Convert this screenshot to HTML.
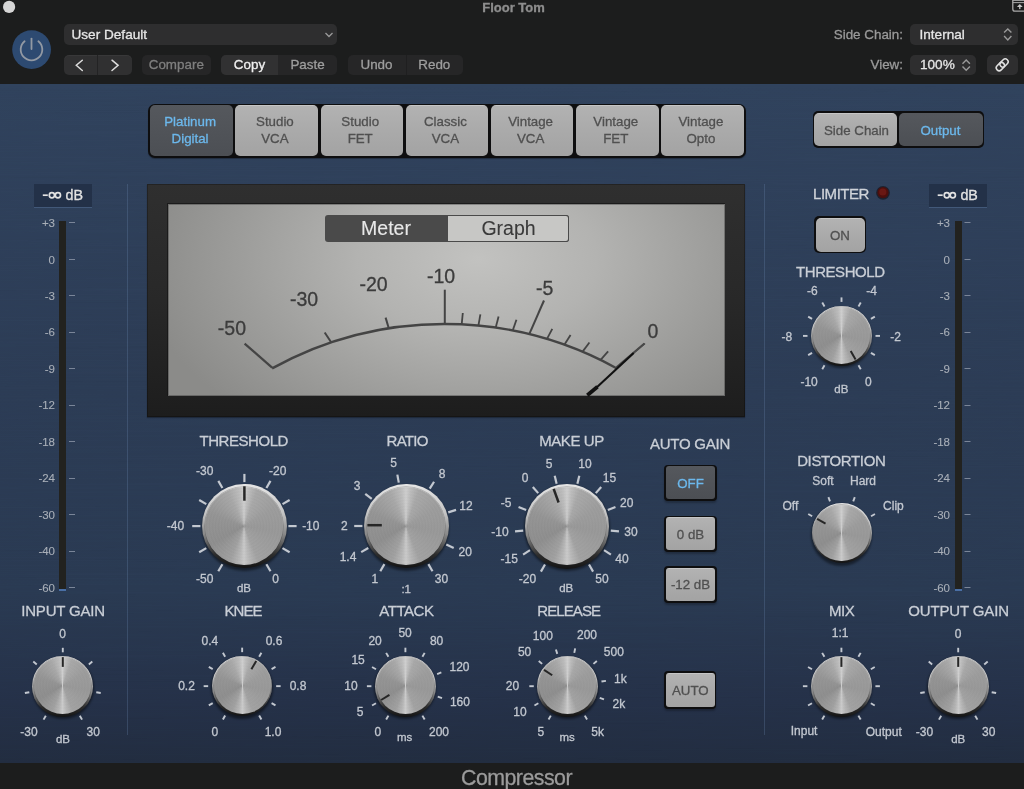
<!DOCTYPE html>
<html><head><meta charset="utf-8"><style>
html,body{margin:0;padding:0;width:1024px;height:789px;overflow:hidden;background:#1c1d1d;font-family:"Liberation Sans", sans-serif;}
</style></head><body>
<div style="position:relative;width:1024px;height:789px;overflow:hidden;">
<div style="position:absolute;left:0px;top:0px;width:1024px;height:84px;background:#1c1d1d;"></div><div style="position:absolute;left:64px;top:24px;width:273px;height:20.5px;background:#2e2e2f;border-radius:5px;"></div><div style="position:absolute;left:64px;top:55px;width:68px;height:19.5px;background:#303031;border-radius:5px;box-shadow:inset 0 1px 0 rgba(255,255,255,0.04);"></div><div style="position:absolute;left:97px;top:55px;width:1.2000000000000028px;height:19.5px;background:#232324;"></div><div style="position:absolute;left:142px;top:55px;width:68.5px;height:19.5px;background:#262627;border-radius:5px;"></div><div style="position:absolute;left:221px;top:55px;width:116px;height:19.5px;background:#262627;border-radius:5px;"></div><div style="position:absolute;left:221px;top:55px;width:57px;height:19.5px;background:#313132;border-radius:5px 0 0 5px;"></div><div style="position:absolute;left:348px;top:55px;width:114.5px;height:19.5px;background:#262627;border-radius:5px;"></div><div style="position:absolute;left:406px;top:55px;width:1px;height:19.5px;background:#1f1f20;"></div><div style="position:absolute;left:910px;top:24px;width:107.5px;height:20.5px;background:#2e2e2f;border-radius:5px;"></div><div style="position:absolute;left:910px;top:55px;width:66px;height:19.5px;background:#2e2e2f;border-radius:5px;"></div><div style="position:absolute;left:987px;top:55px;width:30.5px;height:19.5px;background:#2e2e2f;border-radius:5px;"></div><div style="position:absolute;left:0px;top:84px;width:1024px;height:678.5px;background:linear-gradient(180deg,#2f415b 0%,#2b3b54 45%,#293951 75%,#243047 91%,#212c3f 100%);"></div><svg width="1024" height="679" style="position:absolute;left:0;top:84px;opacity:0.07;mix-blend-mode:overlay;"><filter id="brush" x="0" y="0" width="100%" height="100%"><feTurbulence type="fractalNoise" baseFrequency="0.004 0.9" numOctaves="2" seed="3"/><feColorMatrix type="saturate" values="0"/></filter><rect width="1024" height="679" filter="url(#brush)"/></svg><div style="position:absolute;left:0px;top:762.5px;width:1024px;height:26.5px;background:#1c1d1d;"></div><div style="position:absolute;left:127px;top:184px;width:1px;height:551px;background:rgba(110,140,180,0.27);"></div><div style="position:absolute;left:764px;top:184px;width:1px;height:551px;background:rgba(110,140,180,0.27);"></div><div style="position:absolute;left:148.4px;top:103.7px;width:597.8000000000001px;height:53.89999999999999px;background:#0e0e0f;border-radius:7px;box-shadow:0 1px 1px rgba(0,0,0,0.3);"></div><div style="position:absolute;left:150px;top:105.4px;width:83.4px;height:50.900000000000006px;background:linear-gradient(180deg,#55585d 0%,#4c4f54 100%);border-radius:5px;"></div><div style="position:absolute;left:235px;top:105.4px;width:83px;height:50.900000000000006px;background:linear-gradient(180deg,#cfcfcf 0px,#b2b2b2 1.5px,#aaaaaa 50%,#a3a3a3 100%);border-radius:5px;"></div><div style="position:absolute;left:320.6px;top:105.4px;width:82.39999999999998px;height:50.900000000000006px;background:linear-gradient(180deg,#cfcfcf 0px,#b2b2b2 1.5px,#aaaaaa 50%,#a3a3a3 100%);border-radius:5px;"></div><div style="position:absolute;left:405.6px;top:105.4px;width:82.79999999999995px;height:50.900000000000006px;background:linear-gradient(180deg,#cfcfcf 0px,#b2b2b2 1.5px,#aaaaaa 50%,#a3a3a3 100%);border-radius:5px;"></div><div style="position:absolute;left:491px;top:105.4px;width:82.39999999999998px;height:50.900000000000006px;background:linear-gradient(180deg,#cfcfcf 0px,#b2b2b2 1.5px,#aaaaaa 50%,#a3a3a3 100%);border-radius:5px;"></div><div style="position:absolute;left:576px;top:105.4px;width:82.75px;height:50.900000000000006px;background:linear-gradient(180deg,#cfcfcf 0px,#b2b2b2 1.5px,#aaaaaa 50%,#a3a3a3 100%);border-radius:5px;"></div><div style="position:absolute;left:660.7px;top:105.4px;width:83.5px;height:50.900000000000006px;background:linear-gradient(180deg,#cfcfcf 0px,#b2b2b2 1.5px,#aaaaaa 50%,#a3a3a3 100%);border-radius:5px;"></div><div style="position:absolute;left:812.5px;top:110.75px;width:171.5px;height:37.25px;background:#0e0e0f;border-radius:5px;"></div><div style="position:absolute;left:814px;top:112.5px;width:83px;height:33.5px;background:linear-gradient(180deg,#cfcfcf 0px,#b2b2b2 1.5px,#aaaaaa 50%,#a3a3a3 100%);border-radius:5px;"></div><div style="position:absolute;left:898.5px;top:112.5px;width:84.0px;height:33.5px;background:linear-gradient(180deg,#55585d 0%,#4c4f54 100%);border-radius:5px;"></div><div style="position:absolute;left:33.6px;top:183.8px;width:58.4px;height:23.0px;background:#233148;box-shadow:0 1px 0 rgba(90,120,160,0.45);"></div><div style="position:absolute;left:58.6px;top:220.6px;width:7.399999999999999px;height:369.4px;background:#22221f;"></div><div style="position:absolute;left:58.6px;top:589px;width:7.399999999999999px;height:1.5px;background:#4a6fa5;"></div><div style="position:absolute;left:928.5px;top:183.8px;width:58.5px;height:23.0px;background:#233148;box-shadow:0 1px 0 rgba(90,120,160,0.45);"></div><div style="position:absolute;left:954.8px;top:220.6px;width:7.600000000000023px;height:369.4px;background:#22221f;"></div><div style="position:absolute;left:954.8px;top:589px;width:7.600000000000023px;height:1.5px;background:#4a6fa5;"></div><div style="position:absolute;left:814px;top:216px;width:52px;height:37px;background:#0e0e0f;border-radius:5px;"></div><div style="position:absolute;left:815.5px;top:217.5px;width:49.0px;height:34.0px;background:linear-gradient(180deg,#cfcfcf 0px,#b2b2b2 1.5px,#aaaaaa 50%,#a3a3a3 100%);border-radius:5px;"></div><div style="position:absolute;left:147px;top:184px;width:598px;height:232.60000000000002px;background:linear-gradient(180deg,#2f2f2f 0%,#282828 50%,#1d1d1d 100%);box-shadow:inset 0 0 0 1px rgba(0,0,0,0.25),0 1px 1px rgba(0,0,0,0.3);"></div><div style="position:absolute;left:167px;top:203px;width:558.4px;height:193.39999999999998px;background:rgba(20,20,20,0.7);"></div><div style="position:absolute;left:168px;top:204px;width:556.8px;height:191.8px;background:radial-gradient(ellipse 340px 210px at 310px 55px,#c2c2c0 0%,#b3b3b1 35%,#9d9d9b 70%,#8b8b89 100%);box-shadow:inset 0 0 0 1px rgba(40,40,40,0.35);"></div><div style="position:absolute;left:325px;top:215px;width:244px;height:27px;background:#4a4a4a;border-radius:3px;"></div><div style="position:absolute;left:448px;top:216px;width:120px;height:25px;background:#c7c7c5;border-radius:0 2px 2px 0;box-shadow:0 0 0 1px #4a4a4a;"></div><div style="position:absolute;left:664.4px;top:464.5px;width:52.30000000000007px;height:36.89999999999998px;background:#0e0e0f;border-radius:4px;box-shadow:0 2px 2px rgba(0,0,0,0.25);"></div><div style="position:absolute;left:666.0px;top:466.1px;width:49.10000000000002px;height:32.89999999999998px;background:linear-gradient(180deg,#55585d 0%,#4c4f54 100%);border-radius:3px;"></div><div style="position:absolute;left:664.4px;top:515.8px;width:52.30000000000007px;height:36.60000000000002px;background:#0e0e0f;border-radius:4px;box-shadow:0 2px 2px rgba(0,0,0,0.25);"></div><div style="position:absolute;left:666.0px;top:517.4px;width:49.10000000000002px;height:32.60000000000002px;background:linear-gradient(180deg,#cfcfcf 0px,#b2b2b2 1.5px,#aaaaaa 50%,#a3a3a3 100%);border-radius:3px;"></div><div style="position:absolute;left:664.4px;top:566.2px;width:52.30000000000007px;height:36.799999999999955px;background:#0e0e0f;border-radius:4px;box-shadow:0 2px 2px rgba(0,0,0,0.25);"></div><div style="position:absolute;left:666.0px;top:567.8000000000001px;width:49.10000000000002px;height:32.799999999999955px;background:linear-gradient(180deg,#cfcfcf 0px,#b2b2b2 1.5px,#aaaaaa 50%,#a3a3a3 100%);border-radius:3px;"></div><div style="position:absolute;left:664.3px;top:671.4px;width:52.0px;height:38.10000000000002px;background:#0e0e0f;border-radius:4px;box-shadow:0 2px 2px rgba(0,0,0,0.25);"></div><div style="position:absolute;left:665.9px;top:673.0px;width:48.799999999999955px;height:34.10000000000002px;background:linear-gradient(180deg,#cfcfcf 0px,#b2b2b2 1.5px,#aaaaaa 50%,#a3a3a3 100%);border-radius:3px;"></div>
<div style="position:absolute;left:201.50px;top:484.90px;width:85.80px;height:85.80px;border-radius:50%;background:rgba(0,0,0,0.45);filter:blur(1.2px);"></div><div style="position:absolute;left:202.00px;top:483.70px;width:84.80px;height:84.80px;border-radius:50%;background:linear-gradient(180deg,#e6e6e6 0%,#c4c4c4 35%,#888888 60%,#2c2c2c 84%,#141414 100%);"></div><div style="position:absolute;left:205.40px;top:486.70px;width:78.00px;height:78.00px;border-radius:50%;background:repeating-radial-gradient(circle at 50% 50%,rgba(255,255,255,0.014) 0px,rgba(0,0,0,0.014) 1.5px,rgba(255,255,255,0.014) 3px),conic-gradient(from 0deg,#cecece 0deg,#bdbdbd 7deg,#a8a8a8 20deg,#9c9c9c 60deg,#989898 100deg,#a2a2a2 158deg,#b8b8b8 172deg,#cacaca 180deg,#b6b6b6 188deg,#a0a0a0 202deg,#8e8e8e 240deg,#949494 290deg,#a8a8a8 335deg,#bcbcbc 352deg,#cecece 360deg);box-shadow:0 0 0 0.7px rgba(40,40,40,0.28);"></div><div style="position:absolute;left:363.50px;top:484.80px;width:85.80px;height:85.80px;border-radius:50%;background:rgba(0,0,0,0.45);filter:blur(1.2px);"></div><div style="position:absolute;left:364.00px;top:483.60px;width:84.80px;height:84.80px;border-radius:50%;background:linear-gradient(180deg,#e6e6e6 0%,#c4c4c4 35%,#888888 60%,#2c2c2c 84%,#141414 100%);"></div><div style="position:absolute;left:367.40px;top:486.60px;width:78.00px;height:78.00px;border-radius:50%;background:repeating-radial-gradient(circle at 50% 50%,rgba(255,255,255,0.014) 0px,rgba(0,0,0,0.014) 1.5px,rgba(255,255,255,0.014) 3px),conic-gradient(from 0deg,#cecece 0deg,#bdbdbd 7deg,#a8a8a8 20deg,#9c9c9c 60deg,#989898 100deg,#a2a2a2 158deg,#b8b8b8 172deg,#cacaca 180deg,#b6b6b6 188deg,#a0a0a0 202deg,#8e8e8e 240deg,#949494 290deg,#a8a8a8 335deg,#bcbcbc 352deg,#cecece 360deg);box-shadow:0 0 0 0.7px rgba(40,40,40,0.28);"></div><div style="position:absolute;left:524.10px;top:485.20px;width:85.80px;height:85.80px;border-radius:50%;background:rgba(0,0,0,0.45);filter:blur(1.2px);"></div><div style="position:absolute;left:524.60px;top:484.00px;width:84.80px;height:84.80px;border-radius:50%;background:linear-gradient(180deg,#e6e6e6 0%,#c4c4c4 35%,#888888 60%,#2c2c2c 84%,#141414 100%);"></div><div style="position:absolute;left:528.00px;top:487.00px;width:78.00px;height:78.00px;border-radius:50%;background:repeating-radial-gradient(circle at 50% 50%,rgba(255,255,255,0.014) 0px,rgba(0,0,0,0.014) 1.5px,rgba(255,255,255,0.014) 3px),conic-gradient(from 0deg,#cecece 0deg,#bdbdbd 7deg,#a8a8a8 20deg,#9c9c9c 60deg,#989898 100deg,#a2a2a2 158deg,#b8b8b8 172deg,#cacaca 180deg,#b6b6b6 188deg,#a0a0a0 202deg,#8e8e8e 240deg,#949494 290deg,#a8a8a8 335deg,#bcbcbc 352deg,#cecece 360deg);box-shadow:0 0 0 0.7px rgba(40,40,40,0.28);"></div><div style="position:absolute;left:31.80px;top:657.00px;width:62.00px;height:62.00px;border-radius:50%;background:rgba(0,0,0,0.45);filter:blur(1.2px);"></div><div style="position:absolute;left:32.30px;top:655.80px;width:61.00px;height:61.00px;border-radius:50%;background:linear-gradient(180deg,#e6e6e6 0%,#c4c4c4 35%,#888888 60%,#2c2c2c 84%,#141414 100%);"></div><div style="position:absolute;left:34.20px;top:657.30px;width:57.20px;height:57.20px;border-radius:50%;background:repeating-radial-gradient(circle at 50% 50%,rgba(255,255,255,0.01) 0px,rgba(0,0,0,0.01) 1.5px,rgba(255,255,255,0.01) 3px),conic-gradient(from 0deg,#cecece 0deg,#bdbdbd 7deg,#a8a8a8 20deg,#9c9c9c 60deg,#989898 100deg,#a2a2a2 158deg,#b8b8b8 172deg,#cacaca 180deg,#b6b6b6 188deg,#a0a0a0 202deg,#8e8e8e 240deg,#949494 290deg,#a8a8a8 335deg,#bcbcbc 352deg,#cecece 360deg);box-shadow:0 0 0 0.7px rgba(40,40,40,0.28);"></div><div style="position:absolute;left:927.20px;top:657.00px;width:62.00px;height:62.00px;border-radius:50%;background:rgba(0,0,0,0.45);filter:blur(1.2px);"></div><div style="position:absolute;left:927.70px;top:655.80px;width:61.00px;height:61.00px;border-radius:50%;background:linear-gradient(180deg,#e6e6e6 0%,#c4c4c4 35%,#888888 60%,#2c2c2c 84%,#141414 100%);"></div><div style="position:absolute;left:929.60px;top:657.30px;width:57.20px;height:57.20px;border-radius:50%;background:repeating-radial-gradient(circle at 50% 50%,rgba(255,255,255,0.01) 0px,rgba(0,0,0,0.01) 1.5px,rgba(255,255,255,0.01) 3px),conic-gradient(from 0deg,#cecece 0deg,#bdbdbd 7deg,#a8a8a8 20deg,#9c9c9c 60deg,#989898 100deg,#a2a2a2 158deg,#b8b8b8 172deg,#cacaca 180deg,#b6b6b6 188deg,#a0a0a0 202deg,#8e8e8e 240deg,#949494 290deg,#a8a8a8 335deg,#bcbcbc 352deg,#cecece 360deg);box-shadow:0 0 0 0.7px rgba(40,40,40,0.28);"></div><div style="position:absolute;left:211.35px;top:657.05px;width:61.60px;height:61.60px;border-radius:50%;background:rgba(0,0,0,0.45);filter:blur(1.2px);"></div><div style="position:absolute;left:211.85px;top:655.85px;width:60.60px;height:60.60px;border-radius:50%;background:linear-gradient(180deg,#e6e6e6 0%,#c4c4c4 35%,#888888 60%,#2c2c2c 84%,#141414 100%);"></div><div style="position:absolute;left:213.75px;top:657.35px;width:56.80px;height:56.80px;border-radius:50%;background:repeating-radial-gradient(circle at 50% 50%,rgba(255,255,255,0.01) 0px,rgba(0,0,0,0.01) 1.5px,rgba(255,255,255,0.01) 3px),conic-gradient(from 0deg,#cecece 0deg,#bdbdbd 7deg,#a8a8a8 20deg,#9c9c9c 60deg,#989898 100deg,#a2a2a2 158deg,#b8b8b8 172deg,#cacaca 180deg,#b6b6b6 188deg,#a0a0a0 202deg,#8e8e8e 240deg,#949494 290deg,#a8a8a8 335deg,#bcbcbc 352deg,#cecece 360deg);box-shadow:0 0 0 0.7px rgba(40,40,40,0.28);"></div><div style="position:absolute;left:374.40px;top:656.90px;width:62.00px;height:62.00px;border-radius:50%;background:rgba(0,0,0,0.45);filter:blur(1.2px);"></div><div style="position:absolute;left:374.90px;top:655.70px;width:61.00px;height:61.00px;border-radius:50%;background:linear-gradient(180deg,#e6e6e6 0%,#c4c4c4 35%,#888888 60%,#2c2c2c 84%,#141414 100%);"></div><div style="position:absolute;left:376.80px;top:657.20px;width:57.20px;height:57.20px;border-radius:50%;background:repeating-radial-gradient(circle at 50% 50%,rgba(255,255,255,0.01) 0px,rgba(0,0,0,0.01) 1.5px,rgba(255,255,255,0.01) 3px),conic-gradient(from 0deg,#cecece 0deg,#bdbdbd 7deg,#a8a8a8 20deg,#9c9c9c 60deg,#989898 100deg,#a2a2a2 158deg,#b8b8b8 172deg,#cacaca 180deg,#b6b6b6 188deg,#a0a0a0 202deg,#8e8e8e 240deg,#949494 290deg,#a8a8a8 335deg,#bcbcbc 352deg,#cecece 360deg);box-shadow:0 0 0 0.7px rgba(40,40,40,0.28);"></div><div style="position:absolute;left:536.80px;top:656.90px;width:62.00px;height:62.00px;border-radius:50%;background:rgba(0,0,0,0.45);filter:blur(1.2px);"></div><div style="position:absolute;left:537.30px;top:655.70px;width:61.00px;height:61.00px;border-radius:50%;background:linear-gradient(180deg,#e6e6e6 0%,#c4c4c4 35%,#888888 60%,#2c2c2c 84%,#141414 100%);"></div><div style="position:absolute;left:539.20px;top:657.20px;width:57.20px;height:57.20px;border-radius:50%;background:repeating-radial-gradient(circle at 50% 50%,rgba(255,255,255,0.01) 0px,rgba(0,0,0,0.01) 1.5px,rgba(255,255,255,0.01) 3px),conic-gradient(from 0deg,#cecece 0deg,#bdbdbd 7deg,#a8a8a8 20deg,#9c9c9c 60deg,#989898 100deg,#a2a2a2 158deg,#b8b8b8 172deg,#cacaca 180deg,#b6b6b6 188deg,#a0a0a0 202deg,#8e8e8e 240deg,#949494 290deg,#a8a8a8 335deg,#bcbcbc 352deg,#cecece 360deg);box-shadow:0 0 0 0.7px rgba(40,40,40,0.28);"></div><div style="position:absolute;left:810.80px;top:306.90px;width:61.40px;height:61.40px;border-radius:50%;background:rgba(0,0,0,0.45);filter:blur(1.2px);"></div><div style="position:absolute;left:811.30px;top:305.70px;width:60.40px;height:60.40px;border-radius:50%;background:linear-gradient(180deg,#e6e6e6 0%,#c4c4c4 35%,#888888 60%,#2c2c2c 84%,#141414 100%);"></div><div style="position:absolute;left:813.20px;top:307.20px;width:56.60px;height:56.60px;border-radius:50%;background:repeating-radial-gradient(circle at 50% 50%,rgba(255,255,255,0.01) 0px,rgba(0,0,0,0.01) 1.5px,rgba(255,255,255,0.01) 3px),conic-gradient(from 0deg,#cecece 0deg,#bdbdbd 7deg,#a8a8a8 20deg,#9c9c9c 60deg,#989898 100deg,#a2a2a2 158deg,#b8b8b8 172deg,#cacaca 180deg,#b6b6b6 188deg,#a0a0a0 202deg,#8e8e8e 240deg,#949494 290deg,#a8a8a8 335deg,#bcbcbc 352deg,#cecece 360deg);box-shadow:0 0 0 0.7px rgba(40,40,40,0.28);"></div><div style="position:absolute;left:811.00px;top:504.40px;width:61.20px;height:61.20px;border-radius:50%;background:rgba(0,0,0,0.45);filter:blur(1.2px);"></div><div style="position:absolute;left:811.50px;top:503.20px;width:60.20px;height:60.20px;border-radius:50%;background:linear-gradient(180deg,#e6e6e6 0%,#c4c4c4 35%,#888888 60%,#2c2c2c 84%,#141414 100%);"></div><div style="position:absolute;left:813.40px;top:504.70px;width:56.40px;height:56.40px;border-radius:50%;background:repeating-radial-gradient(circle at 50% 50%,rgba(255,255,255,0.01) 0px,rgba(0,0,0,0.01) 1.5px,rgba(255,255,255,0.01) 3px),conic-gradient(from 0deg,#cecece 0deg,#bdbdbd 7deg,#a8a8a8 20deg,#9c9c9c 60deg,#989898 100deg,#a2a2a2 158deg,#b8b8b8 172deg,#cacaca 180deg,#b6b6b6 188deg,#a0a0a0 202deg,#8e8e8e 240deg,#949494 290deg,#a8a8a8 335deg,#bcbcbc 352deg,#cecece 360deg);box-shadow:0 0 0 0.7px rgba(40,40,40,0.28);"></div><div style="position:absolute;left:810.55px;top:657.05px;width:61.70px;height:61.70px;border-radius:50%;background:rgba(0,0,0,0.45);filter:blur(1.2px);"></div><div style="position:absolute;left:811.05px;top:655.85px;width:60.70px;height:60.70px;border-radius:50%;background:linear-gradient(180deg,#e6e6e6 0%,#c4c4c4 35%,#888888 60%,#2c2c2c 84%,#141414 100%);"></div><div style="position:absolute;left:812.95px;top:657.35px;width:56.90px;height:56.90px;border-radius:50%;background:repeating-radial-gradient(circle at 50% 50%,rgba(255,255,255,0.01) 0px,rgba(0,0,0,0.01) 1.5px,rgba(255,255,255,0.01) 3px),conic-gradient(from 0deg,#cecece 0deg,#bdbdbd 7deg,#a8a8a8 20deg,#9c9c9c 60deg,#989898 100deg,#a2a2a2 158deg,#b8b8b8 172deg,#cacaca 180deg,#b6b6b6 188deg,#a0a0a0 202deg,#8e8e8e 240deg,#949494 290deg,#a8a8a8 335deg,#bcbcbc 352deg,#cecece 360deg);box-shadow:0 0 0 0.7px rgba(40,40,40,0.28);"></div>
<svg width="1024" height="789" viewBox="0 0 1024 789" style="position:absolute;left:0;top:0;font-family:"Liberation Sans", sans-serif;will-change:transform;">
<circle cx="9.1" cy="6.9" r="6.1" fill="#d6d6d6"/><text x="513.5" y="12.0" font-size="13" fill="#8e8e8e" text-anchor="middle" font-weight="bold" stroke="#8e8e8e" stroke-width="0.3" >Floor Tom</text><rect x="1012.8" y="-3" width="16" height="14.2" rx="2.2" fill="none" stroke="#a9a9a9" stroke-width="1.3"/><line x1="1012.8" y1="2.6" x2="1024" y2="2.6" stroke="#a9a9a9" stroke-width="1"/><line x1="1012.8" y1="0.4" x2="1024" y2="0.4" stroke="#a9a9a9" stroke-width="1"/><path d="M1019.8 4 L1016.9 7 L1022.7 7 Z" fill="#c8c8c8"/><rect x="1019.15" y="6.5" width="1.3" height="2.6" fill="#c8c8c8"/><circle cx="31.6" cy="49.55" r="19.4" fill="#2d4a71"/><path d="M24.6 41.2 A10.8 10.8 0 1 0 38.4 41.2" fill="none" stroke="#9299a3" stroke-width="1.8" stroke-linecap="round"/><line x1="31.50" y1="38.60" x2="31.50" y2="49.00" stroke="#9299a3" stroke-width="1.8" stroke-linecap="round" /><text x="71.5" y="38.8" font-size="13.6" fill="#e6e6e6" text-anchor="start" font-weight="normal" stroke="#e6e6e6" stroke-width="0.3" >User Default</text><path d="M325.5 33 L329 36.5 L332.5 33" fill="none" stroke="#9a9a9a" stroke-width="1.3"/><path d="M82.3 60.2 L76.3 65.3 L82.3 70.5" fill="none" stroke="#dcdcdc" stroke-width="1.5" stroke-linecap="round"/><path d="M112 60.2 L118.1 65.3 L112 70.5" fill="none" stroke="#dcdcdc" stroke-width="1.5" stroke-linecap="round"/><text x="176.3" y="69.0" font-size="13.4" fill="#7f7f7f" text-anchor="middle" font-weight="normal" stroke="#7f7f7f" stroke-width="0.3" >Compare</text><text x="249.5" y="69.0" font-size="13.4" fill="#f0f0f0" text-anchor="middle" font-weight="normal" stroke="#f0f0f0" stroke-width="0.3" >Copy</text><text x="307.5" y="69.0" font-size="13.4" fill="#9e9e9e" text-anchor="middle" font-weight="normal" stroke="#9e9e9e" stroke-width="0.3" >Paste</text><text x="376.5" y="69.0" font-size="13.4" fill="#9e9e9e" text-anchor="middle" font-weight="normal" stroke="#9e9e9e" stroke-width="0.3" >Undo</text><text x="434.3" y="69.0" font-size="13.4" fill="#9e9e9e" text-anchor="middle" font-weight="normal" stroke="#9e9e9e" stroke-width="0.3" >Redo</text><text x="903.0" y="38.8" font-size="13.4" fill="#9a9a9a" text-anchor="end" font-weight="normal" stroke="#9a9a9a" stroke-width="0.3" >Side Chain:</text><text x="919.5" y="38.8" font-size="13.6" fill="#e6e6e6" text-anchor="start" font-weight="normal" stroke="#e6e6e6" stroke-width="0.3" >Internal</text><path d="M1004.1 32.5 L1007.8 29 L1011.4 32.5 M1004.1 36.1 L1007.8 39.9 L1011.4 36.1" fill="none" stroke="#9a9a9a" stroke-width="1.4"/><text x="903.0" y="68.8" font-size="13.4" fill="#9a9a9a" text-anchor="end" font-weight="normal" stroke="#9a9a9a" stroke-width="0.3" >View:</text><text x="920.0" y="68.8" font-size="13.6" fill="#e6e6e6" text-anchor="start" font-weight="normal" stroke="#e6e6e6" stroke-width="0.3" >100%</text><path d="M962.5 63.7 L966.2 59.9 L969.9 63.7 M962.5 66.5 L966.2 70.3 L969.9 66.5" fill="none" stroke="#9a9a9a" stroke-width="1.4"/><g transform="translate(1002.2 64.8) rotate(-45)" fill="none" stroke="#e0e0e0" stroke-width="1.5"><rect x="-7.2" y="-2.9" width="9.2" height="5.8" rx="2.9"/><rect x="-2" y="-2.9" width="9.2" height="5.8" rx="2.9"/></g><text x="516.5" y="785.2" font-size="21.3" fill="#9b9b9b" text-anchor="middle" font-weight="normal" stroke="#9b9b9b" stroke-width="0.3" letter-spacing="-0.5">Compressor</text><text x="190.1" y="126.0" font-size="13.3" fill="#6cb8ec" text-anchor="middle" font-weight="normal" stroke="#6cb8ec" stroke-width="0.3" >Platinum</text><text x="190.1" y="143.0" font-size="13.3" fill="#6cb8ec" text-anchor="middle" font-weight="normal" stroke="#6cb8ec" stroke-width="0.3" >Digital</text><text x="274.9" y="126.0" font-size="13.3" fill="#505050" text-anchor="middle" font-weight="normal" stroke="#505050" stroke-width="0.3" >Studio</text><text x="274.9" y="143.0" font-size="13.3" fill="#505050" text-anchor="middle" font-weight="normal" stroke="#505050" stroke-width="0.3" >VCA</text><text x="360.2" y="126.0" font-size="13.3" fill="#505050" text-anchor="middle" font-weight="normal" stroke="#505050" stroke-width="0.3" >Studio</text><text x="360.2" y="143.0" font-size="13.3" fill="#505050" text-anchor="middle" font-weight="normal" stroke="#505050" stroke-width="0.3" >FET</text><text x="445.4" y="126.0" font-size="13.3" fill="#505050" text-anchor="middle" font-weight="normal" stroke="#505050" stroke-width="0.3" >Classic</text><text x="445.4" y="143.0" font-size="13.3" fill="#505050" text-anchor="middle" font-weight="normal" stroke="#505050" stroke-width="0.3" >VCA</text><text x="530.6" y="126.0" font-size="13.3" fill="#505050" text-anchor="middle" font-weight="normal" stroke="#505050" stroke-width="0.3" >Vintage</text><text x="530.6" y="143.0" font-size="13.3" fill="#505050" text-anchor="middle" font-weight="normal" stroke="#505050" stroke-width="0.3" >VCA</text><text x="615.8" y="126.0" font-size="13.3" fill="#505050" text-anchor="middle" font-weight="normal" stroke="#505050" stroke-width="0.3" >Vintage</text><text x="615.8" y="143.0" font-size="13.3" fill="#505050" text-anchor="middle" font-weight="normal" stroke="#505050" stroke-width="0.3" >FET</text><text x="700.9" y="126.0" font-size="13.3" fill="#505050" text-anchor="middle" font-weight="normal" stroke="#505050" stroke-width="0.3" >Vintage</text><text x="700.9" y="143.0" font-size="13.3" fill="#505050" text-anchor="middle" font-weight="normal" stroke="#505050" stroke-width="0.3" >Opto</text><text x="856.5" y="135.0" font-size="13.3" fill="#505050" text-anchor="middle" font-weight="normal" stroke="#505050" stroke-width="0.3" >Side Chain</text><text x="940.5" y="135.0" font-size="13.3" fill="#6cb8ec" text-anchor="middle" font-weight="normal" stroke="#6cb8ec" stroke-width="0.3" >Output</text><g fill="none" stroke="#e2e2e2" stroke-width="1.7"><line x1="42.8" y1="195.2" x2="47.8" y2="195.2"/><circle cx="51.9" cy="195.2" r="2.6"/><circle cx="57.9" cy="195.2" r="2.6"/></g><text x="65.5" y="199.5" font-size="14.3" fill="#e2e2e2" stroke="#e2e2e2" stroke-width="0.3">dB</text><line x1="69.00" y1="222.50" x2="75.00" y2="222.50" stroke="#7a8598" stroke-width="1" stroke-linecap="butt" /><text x="55.0" y="227.0" font-size="11.5" fill="#a9afb8" text-anchor="end" font-weight="normal" stroke="#a9afb8" stroke-width="0.1" >+3</text><line x1="69.00" y1="259.50" x2="75.00" y2="259.50" stroke="#7a8598" stroke-width="1" stroke-linecap="butt" /><text x="55.0" y="263.5" font-size="11.5" fill="#a9afb8" text-anchor="end" font-weight="normal" stroke="#a9afb8" stroke-width="0.1" >0</text><line x1="69.00" y1="295.50" x2="75.00" y2="295.50" stroke="#7a8598" stroke-width="1" stroke-linecap="butt" /><text x="55.0" y="300.0" font-size="11.5" fill="#a9afb8" text-anchor="end" font-weight="normal" stroke="#a9afb8" stroke-width="0.1" >-3</text><line x1="69.00" y1="332.50" x2="75.00" y2="332.50" stroke="#7a8598" stroke-width="1" stroke-linecap="butt" /><text x="55.0" y="336.4" font-size="11.5" fill="#a9afb8" text-anchor="end" font-weight="normal" stroke="#a9afb8" stroke-width="0.1" >-6</text><line x1="69.00" y1="368.50" x2="75.00" y2="368.50" stroke="#7a8598" stroke-width="1" stroke-linecap="butt" /><text x="55.0" y="372.9" font-size="11.5" fill="#a9afb8" text-anchor="end" font-weight="normal" stroke="#a9afb8" stroke-width="0.1" >-9</text><line x1="69.00" y1="405.50" x2="75.00" y2="405.50" stroke="#7a8598" stroke-width="1" stroke-linecap="butt" /><text x="55.0" y="409.4" font-size="11.5" fill="#a9afb8" text-anchor="end" font-weight="normal" stroke="#a9afb8" stroke-width="0.1" >-12</text><line x1="69.00" y1="441.50" x2="75.00" y2="441.50" stroke="#7a8598" stroke-width="1" stroke-linecap="butt" /><text x="55.0" y="445.9" font-size="11.5" fill="#a9afb8" text-anchor="end" font-weight="normal" stroke="#a9afb8" stroke-width="0.1" >-18</text><line x1="69.00" y1="478.50" x2="75.00" y2="478.50" stroke="#7a8598" stroke-width="1" stroke-linecap="butt" /><text x="55.0" y="482.4" font-size="11.5" fill="#a9afb8" text-anchor="end" font-weight="normal" stroke="#a9afb8" stroke-width="0.1" >-24</text><line x1="69.00" y1="514.50" x2="75.00" y2="514.50" stroke="#7a8598" stroke-width="1" stroke-linecap="butt" /><text x="55.0" y="518.8" font-size="11.5" fill="#a9afb8" text-anchor="end" font-weight="normal" stroke="#a9afb8" stroke-width="0.1" >-30</text><line x1="69.00" y1="551.50" x2="75.00" y2="551.50" stroke="#7a8598" stroke-width="1" stroke-linecap="butt" /><text x="55.0" y="555.3" font-size="11.5" fill="#a9afb8" text-anchor="end" font-weight="normal" stroke="#a9afb8" stroke-width="0.1" >-40</text><line x1="69.00" y1="587.50" x2="75.00" y2="587.50" stroke="#7a8598" stroke-width="1" stroke-linecap="butt" /><text x="55.0" y="591.8" font-size="11.5" fill="#a9afb8" text-anchor="end" font-weight="normal" stroke="#a9afb8" stroke-width="0.1" >-60</text><g fill="none" stroke="#e2e2e2" stroke-width="1.7"><line x1="937.7" y1="195.2" x2="942.7" y2="195.2"/><circle cx="946.8" cy="195.2" r="2.6"/><circle cx="952.8" cy="195.2" r="2.6"/></g><text x="960.4" y="199.5" font-size="14.3" fill="#e2e2e2" stroke="#e2e2e2" stroke-width="0.3">dB</text><line x1="964.50" y1="222.50" x2="970.50" y2="222.50" stroke="#7a8598" stroke-width="1" stroke-linecap="butt" /><text x="950.0" y="227.0" font-size="11.5" fill="#a9afb8" text-anchor="end" font-weight="normal" stroke="#a9afb8" stroke-width="0.1" >+3</text><line x1="964.50" y1="259.50" x2="970.50" y2="259.50" stroke="#7a8598" stroke-width="1" stroke-linecap="butt" /><text x="950.0" y="263.5" font-size="11.5" fill="#a9afb8" text-anchor="end" font-weight="normal" stroke="#a9afb8" stroke-width="0.1" >0</text><line x1="964.50" y1="295.50" x2="970.50" y2="295.50" stroke="#7a8598" stroke-width="1" stroke-linecap="butt" /><text x="950.0" y="300.0" font-size="11.5" fill="#a9afb8" text-anchor="end" font-weight="normal" stroke="#a9afb8" stroke-width="0.1" >-3</text><line x1="964.50" y1="332.50" x2="970.50" y2="332.50" stroke="#7a8598" stroke-width="1" stroke-linecap="butt" /><text x="950.0" y="336.4" font-size="11.5" fill="#a9afb8" text-anchor="end" font-weight="normal" stroke="#a9afb8" stroke-width="0.1" >-6</text><line x1="964.50" y1="368.50" x2="970.50" y2="368.50" stroke="#7a8598" stroke-width="1" stroke-linecap="butt" /><text x="950.0" y="372.9" font-size="11.5" fill="#a9afb8" text-anchor="end" font-weight="normal" stroke="#a9afb8" stroke-width="0.1" >-9</text><line x1="964.50" y1="405.50" x2="970.50" y2="405.50" stroke="#7a8598" stroke-width="1" stroke-linecap="butt" /><text x="950.0" y="409.4" font-size="11.5" fill="#a9afb8" text-anchor="end" font-weight="normal" stroke="#a9afb8" stroke-width="0.1" >-12</text><line x1="964.50" y1="441.50" x2="970.50" y2="441.50" stroke="#7a8598" stroke-width="1" stroke-linecap="butt" /><text x="950.0" y="445.9" font-size="11.5" fill="#a9afb8" text-anchor="end" font-weight="normal" stroke="#a9afb8" stroke-width="0.1" >-18</text><line x1="964.50" y1="478.50" x2="970.50" y2="478.50" stroke="#7a8598" stroke-width="1" stroke-linecap="butt" /><text x="950.0" y="482.4" font-size="11.5" fill="#a9afb8" text-anchor="end" font-weight="normal" stroke="#a9afb8" stroke-width="0.1" >-24</text><line x1="964.50" y1="514.50" x2="970.50" y2="514.50" stroke="#7a8598" stroke-width="1" stroke-linecap="butt" /><text x="950.0" y="518.8" font-size="11.5" fill="#a9afb8" text-anchor="end" font-weight="normal" stroke="#a9afb8" stroke-width="0.1" >-30</text><line x1="964.50" y1="551.50" x2="970.50" y2="551.50" stroke="#7a8598" stroke-width="1" stroke-linecap="butt" /><text x="950.0" y="555.3" font-size="11.5" fill="#a9afb8" text-anchor="end" font-weight="normal" stroke="#a9afb8" stroke-width="0.1" >-40</text><line x1="964.50" y1="587.50" x2="970.50" y2="587.50" stroke="#7a8598" stroke-width="1" stroke-linecap="butt" /><text x="950.0" y="591.8" font-size="11.5" fill="#a9afb8" text-anchor="end" font-weight="normal" stroke="#a9afb8" stroke-width="0.1" >-60</text><text x="841.0" y="198.8" font-size="15" fill="#d0d4da" stroke="#d0d4da" stroke-width="0.3" text-anchor="middle" letter-spacing="-0.45">LIMITER</text><circle cx="883" cy="192.8" r="6.9" fill="#1c2230"/><circle cx="883" cy="192.5" r="5.6" fill="#4c0f0d"/><circle cx="882.8" cy="192" r="3.6" fill="#6e1a16" opacity="0.85"/><text x="840.0" y="240.0" font-size="13.3" fill="#505050" text-anchor="middle" font-weight="normal" stroke="#505050" stroke-width="0.3" >ON</text><text x="386.0" y="235.0" font-size="19.5" fill="#e8e8e8" text-anchor="middle" font-weight="normal" stroke="#e8e8e8" stroke-width="0.1" >Meter</text><text x="508.5" y="235.0" font-size="19.5" fill="#3a3a3a" text-anchor="middle" font-weight="normal" stroke="#3a3a3a" stroke-width="0.1" >Graph</text><path d="M272.1 368.41 A356.8 356.8 0 0 1 616.5 368.19" fill="none" stroke="#444" stroke-width="2.4"/><line x1="244.60" y1="343.60" x2="272.10" y2="367.60" stroke="#444" stroke-width="2.2" stroke-linecap="butt" /><line x1="324.70" y1="332.50" x2="331.00" y2="342.00" stroke="#444" stroke-width="2" stroke-linecap="butt" /><line x1="385.60" y1="317.60" x2="388.70" y2="328.00" stroke="#444" stroke-width="2" stroke-linecap="butt" /><line x1="444.80" y1="289.70" x2="444.80" y2="323.30" stroke="#444" stroke-width="2" stroke-linecap="butt" /><line x1="544.00" y1="300.50" x2="529.60" y2="333.30" stroke="#444" stroke-width="2" stroke-linecap="butt" /><line x1="616.50" y1="367.30" x2="644.40" y2="343.60" stroke="#444" stroke-width="2" stroke-linecap="butt" /><line x1="461.75" y1="323.92" x2="462.80" y2="312.97" stroke="#444" stroke-width="1.8" stroke-linecap="butt" /><line x1="478.49" y1="325.12" x2="480.38" y2="314.29" stroke="#444" stroke-width="1.8" stroke-linecap="butt" /><line x1="495.82" y1="327.21" x2="498.57" y2="316.56" stroke="#444" stroke-width="1.8" stroke-linecap="butt" /><line x1="512.86" y1="330.11" x2="516.43" y2="319.70" stroke="#444" stroke-width="1.8" stroke-linecap="butt" /><line x1="547.13" y1="338.57" x2="552.26" y2="328.84" stroke="#444" stroke-width="1.8" stroke-linecap="butt" /><line x1="564.67" y1="344.33" x2="570.54" y2="335.03" stroke="#444" stroke-width="1.8" stroke-linecap="butt" /><line x1="582.80" y1="351.37" x2="589.41" y2="342.58" stroke="#444" stroke-width="1.8" stroke-linecap="butt" /><line x1="600.83" y1="359.54" x2="608.12" y2="351.30" stroke="#444" stroke-width="1.8" stroke-linecap="butt" /><text x="231.9" y="335.0" font-size="19.5" fill="#3c3c3c" text-anchor="middle" font-weight="normal" stroke="#3c3c3c" stroke-width="0.3" >-50</text><text x="304.1" y="305.6" font-size="19.5" fill="#3c3c3c" text-anchor="middle" font-weight="normal" stroke="#3c3c3c" stroke-width="0.3" >-30</text><text x="373.5" y="290.7" font-size="19.5" fill="#3c3c3c" text-anchor="middle" font-weight="normal" stroke="#3c3c3c" stroke-width="0.3" >-20</text><text x="441.0" y="283.4" font-size="19.5" fill="#3c3c3c" text-anchor="middle" font-weight="normal" stroke="#3c3c3c" stroke-width="0.3" >-10</text><text x="544.6" y="294.5" font-size="19.5" fill="#3c3c3c" text-anchor="middle" font-weight="normal" stroke="#3c3c3c" stroke-width="0.3" >-5</text><text x="652.9" y="337.9" font-size="19.5" fill="#3c3c3c" text-anchor="middle" font-weight="normal" stroke="#3c3c3c" stroke-width="0.3" >0</text><path d="M645 343.5 L633.7 353" stroke="#4a4a4a" stroke-width="1.6" fill="none"/><path d="M633.7 353 L596.6 387.6" stroke="#111" stroke-width="2.1" fill="none"/><path d="M597.5 386.8 L587.3 395.2" stroke="#111" stroke-width="3.8" fill="none"/><line x1="222.40" y1="564.21" x2="218.30" y2="571.31" stroke="#c3c8d0" stroke-width="2.2" stroke-linecap="butt" /><line x1="206.29" y1="548.10" x2="199.19" y2="552.20" stroke="#c3c8d0" stroke-width="2.2" stroke-linecap="butt" /><line x1="200.40" y1="526.10" x2="192.20" y2="526.10" stroke="#c3c8d0" stroke-width="2.2" stroke-linecap="butt" /><line x1="206.29" y1="504.10" x2="199.19" y2="500.00" stroke="#c3c8d0" stroke-width="2.2" stroke-linecap="butt" /><line x1="222.40" y1="487.99" x2="218.30" y2="480.89" stroke="#c3c8d0" stroke-width="2.2" stroke-linecap="butt" /><line x1="244.40" y1="482.10" x2="244.40" y2="473.90" stroke="#c3c8d0" stroke-width="2.2" stroke-linecap="butt" /><line x1="266.40" y1="487.99" x2="270.50" y2="480.89" stroke="#c3c8d0" stroke-width="2.2" stroke-linecap="butt" /><line x1="282.51" y1="504.10" x2="289.61" y2="500.00" stroke="#c3c8d0" stroke-width="2.2" stroke-linecap="butt" /><line x1="288.40" y1="526.10" x2="296.60" y2="526.10" stroke="#c3c8d0" stroke-width="2.2" stroke-linecap="butt" /><line x1="282.51" y1="548.10" x2="289.61" y2="552.20" stroke="#c3c8d0" stroke-width="2.2" stroke-linecap="butt" /><line x1="266.40" y1="564.21" x2="270.50" y2="571.31" stroke="#c3c8d0" stroke-width="2.2" stroke-linecap="butt" /><text x="204.7" y="474.6" font-size="12" fill="#c3c8d0" text-anchor="middle" font-weight="normal" stroke="#c3c8d0" stroke-width="0.3" >-30</text><text x="277.7" y="474.6" font-size="12" fill="#c3c8d0" text-anchor="middle" font-weight="normal" stroke="#c3c8d0" stroke-width="0.3" >-20</text><text x="175.5" y="529.6" font-size="12" fill="#c3c8d0" text-anchor="middle" font-weight="normal" stroke="#c3c8d0" stroke-width="0.3" >-40</text><text x="310.8" y="529.6" font-size="12" fill="#c3c8d0" text-anchor="middle" font-weight="normal" stroke="#c3c8d0" stroke-width="0.3" >-10</text><text x="204.7" y="583.0" font-size="12" fill="#c3c8d0" text-anchor="middle" font-weight="normal" stroke="#c3c8d0" stroke-width="0.3" >-50</text><text x="275.5" y="583.0" font-size="12" fill="#c3c8d0" text-anchor="middle" font-weight="normal" stroke="#c3c8d0" stroke-width="0.3" >0</text><text x="243.7" y="446.4" font-size="15" fill="#c9ced6" stroke="#c9ced6" stroke-width="0.3" text-anchor="middle" letter-spacing="-0.44">THRESHOLD</text><text x="244.0" y="592.3" font-size="11.5" fill="#c3c8d0" text-anchor="middle" font-weight="normal" stroke="#c3c8d0" stroke-width="0.3" >dB</text><line x1="384.40" y1="564.11" x2="380.30" y2="571.21" stroke="#c3c8d0" stroke-width="2.2" stroke-linecap="butt" /><line x1="368.29" y1="548.00" x2="361.19" y2="552.10" stroke="#c3c8d0" stroke-width="2.2" stroke-linecap="butt" /><line x1="362.40" y1="526.00" x2="354.20" y2="526.00" stroke="#c3c8d0" stroke-width="2.2" stroke-linecap="butt" /><line x1="371.73" y1="498.91" x2="365.27" y2="493.86" stroke="#c3c8d0" stroke-width="2.2" stroke-linecap="butt" /><line x1="398.76" y1="482.67" x2="397.34" y2="474.59" stroke="#c3c8d0" stroke-width="2.2" stroke-linecap="butt" /><line x1="429.72" y1="488.69" x2="434.06" y2="481.73" stroke="#c3c8d0" stroke-width="2.2" stroke-linecap="butt" /><line x1="448.25" y1="512.40" x2="456.05" y2="509.87" stroke="#c3c8d0" stroke-width="2.2" stroke-linecap="butt" /><line x1="446.28" y1="544.60" x2="453.71" y2="548.06" stroke="#c3c8d0" stroke-width="2.2" stroke-linecap="butt" /><line x1="428.40" y1="564.11" x2="432.50" y2="571.21" stroke="#c3c8d0" stroke-width="2.2" stroke-linecap="butt" /><text x="393.5" y="466.9" font-size="12" fill="#c3c8d0" text-anchor="middle" font-weight="normal" stroke="#c3c8d0" stroke-width="0.3" >5</text><text x="442.0" y="477.6" font-size="12" fill="#c3c8d0" text-anchor="middle" font-weight="normal" stroke="#c3c8d0" stroke-width="0.3" >8</text><text x="357.2" y="490.2" font-size="12" fill="#c3c8d0" text-anchor="middle" font-weight="normal" stroke="#c3c8d0" stroke-width="0.3" >3</text><text x="466.0" y="510.2" font-size="12" fill="#c3c8d0" text-anchor="middle" font-weight="normal" stroke="#c3c8d0" stroke-width="0.3" >12</text><text x="344.4" y="529.6" font-size="12" fill="#c3c8d0" text-anchor="middle" font-weight="normal" stroke="#c3c8d0" stroke-width="0.3" >2</text><text x="465.3" y="555.6" font-size="12" fill="#c3c8d0" text-anchor="middle" font-weight="normal" stroke="#c3c8d0" stroke-width="0.3" >20</text><text x="348.0" y="560.9" font-size="12" fill="#c3c8d0" text-anchor="middle" font-weight="normal" stroke="#c3c8d0" stroke-width="0.3" >1.4</text><text x="441.4" y="583.0" font-size="12" fill="#c3c8d0" text-anchor="middle" font-weight="normal" stroke="#c3c8d0" stroke-width="0.3" >30</text><text x="374.8" y="583.0" font-size="12" fill="#c3c8d0" text-anchor="middle" font-weight="normal" stroke="#c3c8d0" stroke-width="0.3" >1</text><text x="407.1" y="446.4" font-size="15" fill="#c9ced6" stroke="#c9ced6" stroke-width="0.3" text-anchor="middle" letter-spacing="-0.73">RATIO</text><text x="406.2" y="592.8" font-size="11.5" fill="#c3c8d0" text-anchor="middle" font-weight="normal" stroke="#c3c8d0" stroke-width="0.3" >:1</text><line x1="545.00" y1="564.51" x2="540.90" y2="571.61" stroke="#c3c8d0" stroke-width="2.2" stroke-linecap="butt" /><line x1="529.98" y1="550.19" x2="523.09" y2="554.62" stroke="#c3c8d0" stroke-width="2.2" stroke-linecap="butt" /><line x1="523.20" y1="530.58" x2="515.04" y2="531.36" stroke="#c3c8d0" stroke-width="2.2" stroke-linecap="butt" /><line x1="526.15" y1="510.05" x2="518.54" y2="507.00" stroke="#c3c8d0" stroke-width="2.2" stroke-linecap="butt" /><line x1="538.19" y1="493.15" x2="532.82" y2="486.95" stroke="#c3c8d0" stroke-width="2.2" stroke-linecap="butt" /><line x1="556.63" y1="483.64" x2="554.69" y2="475.67" stroke="#c3c8d0" stroke-width="2.2" stroke-linecap="butt" /><line x1="577.37" y1="483.64" x2="579.31" y2="475.67" stroke="#c3c8d0" stroke-width="2.2" stroke-linecap="butt" /><line x1="595.81" y1="493.15" x2="601.18" y2="486.95" stroke="#c3c8d0" stroke-width="2.2" stroke-linecap="butt" /><line x1="607.85" y1="510.05" x2="615.46" y2="507.00" stroke="#c3c8d0" stroke-width="2.2" stroke-linecap="butt" /><line x1="610.80" y1="530.58" x2="618.96" y2="531.36" stroke="#c3c8d0" stroke-width="2.2" stroke-linecap="butt" /><line x1="604.02" y1="550.19" x2="610.91" y2="554.62" stroke="#c3c8d0" stroke-width="2.2" stroke-linecap="butt" /><line x1="589.00" y1="564.51" x2="593.10" y2="571.61" stroke="#c3c8d0" stroke-width="2.2" stroke-linecap="butt" /><text x="527.5" y="583.0" font-size="12" fill="#c3c8d0" text-anchor="middle" font-weight="normal" stroke="#c3c8d0" stroke-width="0.3" >-20</text><text x="509.2" y="563.2" font-size="12" fill="#c3c8d0" text-anchor="middle" font-weight="normal" stroke="#c3c8d0" stroke-width="0.3" >-15</text><text x="500.0" y="535.8" font-size="12" fill="#c3c8d0" text-anchor="middle" font-weight="normal" stroke="#c3c8d0" stroke-width="0.3" >-10</text><text x="506.2" y="506.6" font-size="12" fill="#c3c8d0" text-anchor="middle" font-weight="normal" stroke="#c3c8d0" stroke-width="0.3" >-5</text><text x="525.0" y="482.2" font-size="12" fill="#c3c8d0" text-anchor="middle" font-weight="normal" stroke="#c3c8d0" stroke-width="0.3" >0</text><text x="549.1" y="467.8" font-size="12" fill="#c3c8d0" text-anchor="middle" font-weight="normal" stroke="#c3c8d0" stroke-width="0.3" >5</text><text x="585.0" y="467.8" font-size="12" fill="#c3c8d0" text-anchor="middle" font-weight="normal" stroke="#c3c8d0" stroke-width="0.3" >10</text><text x="609.4" y="482.2" font-size="12" fill="#c3c8d0" text-anchor="middle" font-weight="normal" stroke="#c3c8d0" stroke-width="0.3" >15</text><text x="626.7" y="506.6" font-size="12" fill="#c3c8d0" text-anchor="middle" font-weight="normal" stroke="#c3c8d0" stroke-width="0.3" >20</text><text x="631.0" y="535.8" font-size="12" fill="#c3c8d0" text-anchor="middle" font-weight="normal" stroke="#c3c8d0" stroke-width="0.3" >30</text><text x="621.9" y="563.2" font-size="12" fill="#c3c8d0" text-anchor="middle" font-weight="normal" stroke="#c3c8d0" stroke-width="0.3" >40</text><text x="602.0" y="583.0" font-size="12" fill="#c3c8d0" text-anchor="middle" font-weight="normal" stroke="#c3c8d0" stroke-width="0.3" >50</text><text x="571.5" y="446.4" font-size="15" fill="#c9ced6" stroke="#c9ced6" stroke-width="0.3" text-anchor="middle" letter-spacing="-0.42">MAKE UP</text><text x="566.2" y="592.4" font-size="11.5" fill="#c3c8d0" text-anchor="middle" font-weight="normal" stroke="#c3c8d0" stroke-width="0.3" >dB</text><line x1="45.80" y1="715.74" x2="43.55" y2="719.64" stroke="#c3c8d0" stroke-width="1.9" stroke-linecap="butt" /><line x1="29.32" y1="692.20" x2="24.88" y2="692.99" stroke="#c3c8d0" stroke-width="1.9" stroke-linecap="butt" /><line x1="36.75" y1="664.45" x2="33.31" y2="661.55" stroke="#c3c8d0" stroke-width="1.9" stroke-linecap="butt" /><line x1="62.80" y1="652.30" x2="62.80" y2="647.80" stroke="#c3c8d0" stroke-width="1.9" stroke-linecap="butt" /><line x1="88.85" y1="664.45" x2="92.29" y2="661.55" stroke="#c3c8d0" stroke-width="1.9" stroke-linecap="butt" /><line x1="96.28" y1="692.20" x2="100.72" y2="692.99" stroke="#c3c8d0" stroke-width="1.9" stroke-linecap="butt" /><line x1="79.80" y1="715.74" x2="82.05" y2="719.64" stroke="#c3c8d0" stroke-width="1.9" stroke-linecap="butt" /><text x="62.6" y="638.0" font-size="12" fill="#c3c8d0" text-anchor="middle" font-weight="normal" stroke="#c3c8d0" stroke-width="0.3" >0</text><text x="29.0" y="736.4" font-size="12" fill="#c3c8d0" text-anchor="middle" font-weight="normal" stroke="#c3c8d0" stroke-width="0.3" >-30</text><text x="93.3" y="736.4" font-size="12" fill="#c3c8d0" text-anchor="middle" font-weight="normal" stroke="#c3c8d0" stroke-width="0.3" >30</text><text x="63.1" y="615.6" font-size="15" fill="#c9ced6" stroke="#c9ced6" stroke-width="0.3" text-anchor="middle" letter-spacing="-0.17">INPUT GAIN</text><text x="63.0" y="742.8" font-size="11.5" fill="#c3c8d0" text-anchor="middle" font-weight="normal" stroke="#c3c8d0" stroke-width="0.3" >dB</text><line x1="941.20" y1="715.74" x2="938.95" y2="719.64" stroke="#c3c8d0" stroke-width="1.9" stroke-linecap="butt" /><line x1="924.72" y1="692.20" x2="920.28" y2="692.99" stroke="#c3c8d0" stroke-width="1.9" stroke-linecap="butt" /><line x1="932.15" y1="664.45" x2="928.71" y2="661.55" stroke="#c3c8d0" stroke-width="1.9" stroke-linecap="butt" /><line x1="958.20" y1="652.30" x2="958.20" y2="647.80" stroke="#c3c8d0" stroke-width="1.9" stroke-linecap="butt" /><line x1="984.25" y1="664.45" x2="987.69" y2="661.55" stroke="#c3c8d0" stroke-width="1.9" stroke-linecap="butt" /><line x1="991.68" y1="692.20" x2="996.12" y2="692.99" stroke="#c3c8d0" stroke-width="1.9" stroke-linecap="butt" /><line x1="975.20" y1="715.74" x2="977.45" y2="719.64" stroke="#c3c8d0" stroke-width="1.9" stroke-linecap="butt" /><text x="958.2" y="638.0" font-size="12" fill="#c3c8d0" text-anchor="middle" font-weight="normal" stroke="#c3c8d0" stroke-width="0.3" >0</text><text x="924.5" y="736.4" font-size="12" fill="#c3c8d0" text-anchor="middle" font-weight="normal" stroke="#c3c8d0" stroke-width="0.3" >-30</text><text x="988.8" y="736.4" font-size="12" fill="#c3c8d0" text-anchor="middle" font-weight="normal" stroke="#c3c8d0" stroke-width="0.3" >30</text><text x="958.6" y="615.6" font-size="15" fill="#c9ced6" stroke="#c9ced6" stroke-width="0.3" text-anchor="middle" letter-spacing="-0.13">OUTPUT GAIN</text><text x="958.2" y="742.8" font-size="11.5" fill="#c3c8d0" text-anchor="middle" font-weight="normal" stroke="#c3c8d0" stroke-width="0.3" >dB</text><line x1="225.15" y1="715.59" x2="222.90" y2="719.49" stroke="#c3c8d0" stroke-width="1.9" stroke-linecap="butt" /><line x1="212.71" y1="703.15" x2="208.81" y2="705.40" stroke="#c3c8d0" stroke-width="1.9" stroke-linecap="butt" /><line x1="208.15" y1="686.15" x2="203.65" y2="686.15" stroke="#c3c8d0" stroke-width="1.9" stroke-linecap="butt" /><line x1="212.71" y1="669.15" x2="208.81" y2="666.90" stroke="#c3c8d0" stroke-width="1.9" stroke-linecap="butt" /><line x1="225.15" y1="656.71" x2="222.90" y2="652.81" stroke="#c3c8d0" stroke-width="1.9" stroke-linecap="butt" /><line x1="242.15" y1="652.15" x2="242.15" y2="647.65" stroke="#c3c8d0" stroke-width="1.9" stroke-linecap="butt" /><line x1="259.15" y1="656.71" x2="261.40" y2="652.81" stroke="#c3c8d0" stroke-width="1.9" stroke-linecap="butt" /><line x1="271.59" y1="669.15" x2="275.49" y2="666.90" stroke="#c3c8d0" stroke-width="1.9" stroke-linecap="butt" /><line x1="276.15" y1="686.15" x2="280.65" y2="686.15" stroke="#c3c8d0" stroke-width="1.9" stroke-linecap="butt" /><line x1="271.59" y1="703.15" x2="275.49" y2="705.40" stroke="#c3c8d0" stroke-width="1.9" stroke-linecap="butt" /><line x1="259.15" y1="715.59" x2="261.40" y2="719.49" stroke="#c3c8d0" stroke-width="1.9" stroke-linecap="butt" /><text x="209.8" y="644.6" font-size="12" fill="#c3c8d0" text-anchor="middle" font-weight="normal" stroke="#c3c8d0" stroke-width="0.3" >0.4</text><text x="274.0" y="644.6" font-size="12" fill="#c3c8d0" text-anchor="middle" font-weight="normal" stroke="#c3c8d0" stroke-width="0.3" >0.6</text><text x="186.5" y="690.2" font-size="12" fill="#c3c8d0" text-anchor="middle" font-weight="normal" stroke="#c3c8d0" stroke-width="0.3" >0.2</text><text x="298.0" y="690.2" font-size="12" fill="#c3c8d0" text-anchor="middle" font-weight="normal" stroke="#c3c8d0" stroke-width="0.3" >0.8</text><text x="214.9" y="735.8" font-size="12" fill="#c3c8d0" text-anchor="middle" font-weight="normal" stroke="#c3c8d0" stroke-width="0.3" >0</text><text x="273.0" y="735.8" font-size="12" fill="#c3c8d0" text-anchor="middle" font-weight="normal" stroke="#c3c8d0" stroke-width="0.3" >1.0</text><text x="243.0" y="615.7" font-size="15" fill="#c9ced6" stroke="#c9ced6" stroke-width="0.3" text-anchor="middle" letter-spacing="-0.90">KNEE</text><line x1="388.40" y1="715.64" x2="386.15" y2="719.54" stroke="#c3c8d0" stroke-width="1.9" stroke-linecap="butt" /><line x1="375.96" y1="703.20" x2="372.06" y2="705.45" stroke="#c3c8d0" stroke-width="1.9" stroke-linecap="butt" /><line x1="371.40" y1="686.20" x2="366.90" y2="686.20" stroke="#c3c8d0" stroke-width="1.9" stroke-linecap="butt" /><line x1="375.96" y1="669.20" x2="372.06" y2="666.95" stroke="#c3c8d0" stroke-width="1.9" stroke-linecap="butt" /><line x1="388.40" y1="656.76" x2="386.15" y2="652.86" stroke="#c3c8d0" stroke-width="1.9" stroke-linecap="butt" /><line x1="405.40" y1="652.20" x2="405.40" y2="647.70" stroke="#c3c8d0" stroke-width="1.9" stroke-linecap="butt" /><line x1="422.40" y1="656.76" x2="424.65" y2="652.86" stroke="#c3c8d0" stroke-width="1.9" stroke-linecap="butt" /><line x1="437.14" y1="674.02" x2="441.34" y2="672.40" stroke="#c3c8d0" stroke-width="1.9" stroke-linecap="butt" /><line x1="437.74" y1="696.71" x2="442.02" y2="698.10" stroke="#c3c8d0" stroke-width="1.9" stroke-linecap="butt" /><line x1="422.40" y1="715.64" x2="424.65" y2="719.54" stroke="#c3c8d0" stroke-width="1.9" stroke-linecap="butt" /><text x="405.1" y="637.1" font-size="12" fill="#c3c8d0" text-anchor="middle" font-weight="normal" stroke="#c3c8d0" stroke-width="0.3" >50</text><text x="375.1" y="644.6" font-size="12" fill="#c3c8d0" text-anchor="middle" font-weight="normal" stroke="#c3c8d0" stroke-width="0.3" >20</text><text x="436.6" y="644.6" font-size="12" fill="#c3c8d0" text-anchor="middle" font-weight="normal" stroke="#c3c8d0" stroke-width="0.3" >80</text><text x="358.1" y="663.9" font-size="12" fill="#c3c8d0" text-anchor="middle" font-weight="normal" stroke="#c3c8d0" stroke-width="0.3" >15</text><text x="459.5" y="670.5" font-size="12" fill="#c3c8d0" text-anchor="middle" font-weight="normal" stroke="#c3c8d0" stroke-width="0.3" >120</text><text x="351.0" y="690.2" font-size="12" fill="#c3c8d0" text-anchor="middle" font-weight="normal" stroke="#c3c8d0" stroke-width="0.3" >10</text><text x="459.9" y="706.0" font-size="12" fill="#c3c8d0" text-anchor="middle" font-weight="normal" stroke="#c3c8d0" stroke-width="0.3" >160</text><text x="360.1" y="715.5" font-size="12" fill="#c3c8d0" text-anchor="middle" font-weight="normal" stroke="#c3c8d0" stroke-width="0.3" >5</text><text x="377.8" y="735.8" font-size="12" fill="#c3c8d0" text-anchor="middle" font-weight="normal" stroke="#c3c8d0" stroke-width="0.3" >0</text><text x="439.0" y="735.8" font-size="12" fill="#c3c8d0" text-anchor="middle" font-weight="normal" stroke="#c3c8d0" stroke-width="0.3" >200</text><text x="406.4" y="615.7" font-size="15" fill="#c9ced6" stroke="#c9ced6" stroke-width="0.3" text-anchor="middle" letter-spacing="-0.45">ATTACK</text><text x="404.7" y="741.4" font-size="11.5" fill="#c3c8d0" text-anchor="middle" font-weight="normal" stroke="#c3c8d0" stroke-width="0.3" >ms</text><line x1="550.80" y1="715.64" x2="548.55" y2="719.54" stroke="#c3c8d0" stroke-width="1.9" stroke-linecap="butt" /><line x1="538.36" y1="703.20" x2="534.46" y2="705.45" stroke="#c3c8d0" stroke-width="1.9" stroke-linecap="butt" /><line x1="533.80" y1="686.20" x2="529.30" y2="686.20" stroke="#c3c8d0" stroke-width="1.9" stroke-linecap="butt" /><line x1="542.14" y1="663.89" x2="538.74" y2="660.94" stroke="#c3c8d0" stroke-width="1.9" stroke-linecap="butt" /><line x1="557.29" y1="653.86" x2="555.90" y2="649.58" stroke="#c3c8d0" stroke-width="1.9" stroke-linecap="butt" /><line x1="574.29" y1="652.82" x2="575.15" y2="648.41" stroke="#c3c8d0" stroke-width="1.9" stroke-linecap="butt" /><line x1="593.46" y1="663.89" x2="596.86" y2="660.94" stroke="#c3c8d0" stroke-width="1.9" stroke-linecap="butt" /><line x1="601.47" y1="681.47" x2="605.93" y2="680.84" stroke="#c3c8d0" stroke-width="1.9" stroke-linecap="butt" /><line x1="599.75" y1="697.83" x2="603.98" y2="699.37" stroke="#c3c8d0" stroke-width="1.9" stroke-linecap="butt" /><line x1="584.80" y1="715.64" x2="587.05" y2="719.54" stroke="#c3c8d0" stroke-width="1.9" stroke-linecap="butt" /><text x="542.8" y="640.1" font-size="12" fill="#c3c8d0" text-anchor="middle" font-weight="normal" stroke="#c3c8d0" stroke-width="0.3" >100</text><text x="587.0" y="638.5" font-size="12" fill="#c3c8d0" text-anchor="middle" font-weight="normal" stroke="#c3c8d0" stroke-width="0.3" >200</text><text x="524.6" y="655.7" font-size="12" fill="#c3c8d0" text-anchor="middle" font-weight="normal" stroke="#c3c8d0" stroke-width="0.3" >50</text><text x="613.8" y="655.7" font-size="12" fill="#c3c8d0" text-anchor="middle" font-weight="normal" stroke="#c3c8d0" stroke-width="0.3" >500</text><text x="620.3" y="682.5" font-size="12" fill="#c3c8d0" text-anchor="middle" font-weight="normal" stroke="#c3c8d0" stroke-width="0.3" >1k</text><text x="512.4" y="690.2" font-size="12" fill="#c3c8d0" text-anchor="middle" font-weight="normal" stroke="#c3c8d0" stroke-width="0.3" >20</text><text x="618.9" y="707.8" font-size="12" fill="#c3c8d0" text-anchor="middle" font-weight="normal" stroke="#c3c8d0" stroke-width="0.3" >2k</text><text x="520.0" y="715.5" font-size="12" fill="#c3c8d0" text-anchor="middle" font-weight="normal" stroke="#c3c8d0" stroke-width="0.3" >10</text><text x="597.6" y="735.8" font-size="12" fill="#c3c8d0" text-anchor="middle" font-weight="normal" stroke="#c3c8d0" stroke-width="0.3" >5k</text><text x="540.8" y="735.8" font-size="12" fill="#c3c8d0" text-anchor="middle" font-weight="normal" stroke="#c3c8d0" stroke-width="0.3" >5</text><text x="568.7" y="615.7" font-size="15" fill="#c9ced6" stroke="#c9ced6" stroke-width="0.3" text-anchor="middle" letter-spacing="-0.90">RELEASE</text><text x="567.2" y="741.4" font-size="11.5" fill="#c3c8d0" text-anchor="middle" font-weight="normal" stroke="#c3c8d0" stroke-width="0.3" >ms</text><line x1="824.50" y1="365.34" x2="822.25" y2="369.24" stroke="#c3c8d0" stroke-width="1.9" stroke-linecap="butt" /><line x1="812.06" y1="352.90" x2="808.16" y2="355.15" stroke="#c3c8d0" stroke-width="1.9" stroke-linecap="butt" /><line x1="807.50" y1="335.90" x2="803.00" y2="335.90" stroke="#c3c8d0" stroke-width="1.9" stroke-linecap="butt" /><line x1="812.06" y1="318.90" x2="808.16" y2="316.65" stroke="#c3c8d0" stroke-width="1.9" stroke-linecap="butt" /><line x1="824.50" y1="306.46" x2="822.25" y2="302.56" stroke="#c3c8d0" stroke-width="1.9" stroke-linecap="butt" /><line x1="841.50" y1="301.90" x2="841.50" y2="297.40" stroke="#c3c8d0" stroke-width="1.9" stroke-linecap="butt" /><line x1="858.50" y1="306.46" x2="860.75" y2="302.56" stroke="#c3c8d0" stroke-width="1.9" stroke-linecap="butt" /><line x1="870.94" y1="318.90" x2="874.84" y2="316.65" stroke="#c3c8d0" stroke-width="1.9" stroke-linecap="butt" /><line x1="875.50" y1="335.90" x2="880.00" y2="335.90" stroke="#c3c8d0" stroke-width="1.9" stroke-linecap="butt" /><line x1="870.94" y1="352.90" x2="874.84" y2="355.15" stroke="#c3c8d0" stroke-width="1.9" stroke-linecap="butt" /><line x1="858.50" y1="365.34" x2="860.75" y2="369.24" stroke="#c3c8d0" stroke-width="1.9" stroke-linecap="butt" /><text x="812.3" y="294.8" font-size="12" fill="#c3c8d0" text-anchor="middle" font-weight="normal" stroke="#c3c8d0" stroke-width="0.3" >-6</text><text x="871.5" y="294.8" font-size="12" fill="#c3c8d0" text-anchor="middle" font-weight="normal" stroke="#c3c8d0" stroke-width="0.3" >-4</text><text x="786.9" y="340.7" font-size="12" fill="#c3c8d0" text-anchor="middle" font-weight="normal" stroke="#c3c8d0" stroke-width="0.3" >-8</text><text x="895.7" y="340.7" font-size="12" fill="#c3c8d0" text-anchor="middle" font-weight="normal" stroke="#c3c8d0" stroke-width="0.3" >-2</text><text x="809.1" y="385.7" font-size="12" fill="#c3c8d0" text-anchor="middle" font-weight="normal" stroke="#c3c8d0" stroke-width="0.3" >-10</text><text x="868.3" y="385.7" font-size="12" fill="#c3c8d0" text-anchor="middle" font-weight="normal" stroke="#c3c8d0" stroke-width="0.3" >0</text><text x="840.3" y="276.9" font-size="15" fill="#c9ced6" stroke="#c9ced6" stroke-width="0.3" text-anchor="middle" letter-spacing="-0.44">THRESHOLD</text><text x="841.4" y="392.9" font-size="11.5" fill="#c3c8d0" text-anchor="middle" font-weight="normal" stroke="#c3c8d0" stroke-width="0.3" >dB</text><line x1="812.16" y1="516.30" x2="808.26" y2="514.05" stroke="#c3c8d0" stroke-width="1.9" stroke-linecap="butt" /><line x1="829.97" y1="501.35" x2="828.43" y2="497.12" stroke="#c3c8d0" stroke-width="1.9" stroke-linecap="butt" /><line x1="853.23" y1="501.35" x2="854.77" y2="497.12" stroke="#c3c8d0" stroke-width="1.9" stroke-linecap="butt" /><line x1="871.04" y1="516.30" x2="874.94" y2="514.05" stroke="#c3c8d0" stroke-width="1.9" stroke-linecap="butt" /><text x="822.9" y="484.5" font-size="12" fill="#c3c8d0" text-anchor="middle" font-weight="normal" stroke="#c3c8d0" stroke-width="0.3" >Soft</text><text x="863.0" y="484.5" font-size="12" fill="#c3c8d0" text-anchor="middle" font-weight="normal" stroke="#c3c8d0" stroke-width="0.3" >Hard</text><text x="790.4" y="510.4" font-size="12" fill="#c3c8d0" text-anchor="middle" font-weight="normal" stroke="#c3c8d0" stroke-width="0.3" >Off</text><text x="893.4" y="510.4" font-size="12" fill="#c3c8d0" text-anchor="middle" font-weight="normal" stroke="#c3c8d0" stroke-width="0.3" >Clip</text><text x="841.3" y="466.1" font-size="15" fill="#c9ced6" stroke="#c9ced6" stroke-width="0.3" text-anchor="middle" letter-spacing="-0.37">DISTORTION</text><line x1="824.40" y1="715.64" x2="822.15" y2="719.54" stroke="#c3c8d0" stroke-width="1.9" stroke-linecap="butt" /><line x1="811.96" y1="703.20" x2="808.06" y2="705.45" stroke="#c3c8d0" stroke-width="1.9" stroke-linecap="butt" /><line x1="807.40" y1="686.20" x2="802.90" y2="686.20" stroke="#c3c8d0" stroke-width="1.9" stroke-linecap="butt" /><line x1="811.96" y1="669.20" x2="808.06" y2="666.95" stroke="#c3c8d0" stroke-width="1.9" stroke-linecap="butt" /><line x1="824.40" y1="656.76" x2="822.15" y2="652.86" stroke="#c3c8d0" stroke-width="1.9" stroke-linecap="butt" /><line x1="841.40" y1="652.20" x2="841.40" y2="647.70" stroke="#c3c8d0" stroke-width="1.9" stroke-linecap="butt" /><line x1="858.40" y1="656.76" x2="860.65" y2="652.86" stroke="#c3c8d0" stroke-width="1.9" stroke-linecap="butt" /><line x1="870.84" y1="669.20" x2="874.74" y2="666.95" stroke="#c3c8d0" stroke-width="1.9" stroke-linecap="butt" /><line x1="875.40" y1="686.20" x2="879.90" y2="686.20" stroke="#c3c8d0" stroke-width="1.9" stroke-linecap="butt" /><line x1="870.84" y1="703.20" x2="874.74" y2="705.45" stroke="#c3c8d0" stroke-width="1.9" stroke-linecap="butt" /><line x1="858.40" y1="715.64" x2="860.65" y2="719.54" stroke="#c3c8d0" stroke-width="1.9" stroke-linecap="butt" /><text x="840.1" y="637.0" font-size="12" fill="#c3c8d0" text-anchor="middle" font-weight="normal" stroke="#c3c8d0" stroke-width="0.3" >1:1</text><text x="804.1" y="734.9" font-size="12" fill="#c3c8d0" text-anchor="middle" font-weight="normal" stroke="#c3c8d0" stroke-width="0.3" >Input</text><text x="883.8" y="735.6" font-size="12" fill="#c3c8d0" text-anchor="middle" font-weight="normal" stroke="#c3c8d0" stroke-width="0.3" >Output</text><text x="841.6" y="616.3" font-size="15" fill="#c9ced6" stroke="#c9ced6" stroke-width="0.3" text-anchor="middle" letter-spacing="-0.43">MIX</text><text x="690.0" y="449.1" font-size="15" fill="#c9ced6" stroke="#c9ced6" stroke-width="0.3" text-anchor="middle" letter-spacing="-0.24">AUTO GAIN</text><text x="690.5" y="487.8" font-size="13.3" fill="#6cb8ec" text-anchor="middle" font-weight="normal" stroke="#6cb8ec" stroke-width="0.3" >OFF</text><text x="690.5" y="538.9" font-size="13.3" fill="#505050" text-anchor="middle" font-weight="normal" stroke="#505050" stroke-width="0.3" >0 dB</text><text x="690.5" y="589.4" font-size="13.3" fill="#505050" text-anchor="middle" font-weight="normal" stroke="#505050" stroke-width="0.3" >-12 dB</text><text x="690.3" y="695.2" font-size="13.3" fill="#505050" text-anchor="middle" font-weight="normal" stroke="#505050" stroke-width="0.3" >AUTO</text>
<line x1="244.40" y1="486.29" x2="244.40" y2="500.71" stroke="#262626" stroke-width="2.5"/><line x1="367.39" y1="525.20" x2="381.81" y2="525.20" stroke="#262626" stroke-width="2.5"/><line x1="553.66" y1="488.94" x2="558.59" y2="502.49" stroke="#262626" stroke-width="2.5"/><line x1="62.80" y1="657.13" x2="62.80" y2="666.89" stroke="#262626" stroke-width="2.0"/><line x1="958.20" y1="657.13" x2="958.20" y2="666.89" stroke="#262626" stroke-width="2.0"/><line x1="256.24" y1="660.95" x2="251.39" y2="669.34" stroke="#262626" stroke-width="2.0"/><line x1="381.09" y1="700.01" x2="389.45" y2="694.98" stroke="#262626" stroke-width="2.0"/><line x1="544.01" y1="669.95" x2="552.20" y2="675.27" stroke="#262626" stroke-width="2.0"/><line x1="855.54" y1="359.42" x2="850.71" y2="351.05" stroke="#262626" stroke-width="2.0"/><line x1="817.12" y1="518.93" x2="825.54" y2="523.60" stroke="#262626" stroke-width="2.0"/><line x1="841.40" y1="657.17" x2="841.40" y2="666.89" stroke="#262626" stroke-width="2.0"/>
</svg>
</div></body></html>
